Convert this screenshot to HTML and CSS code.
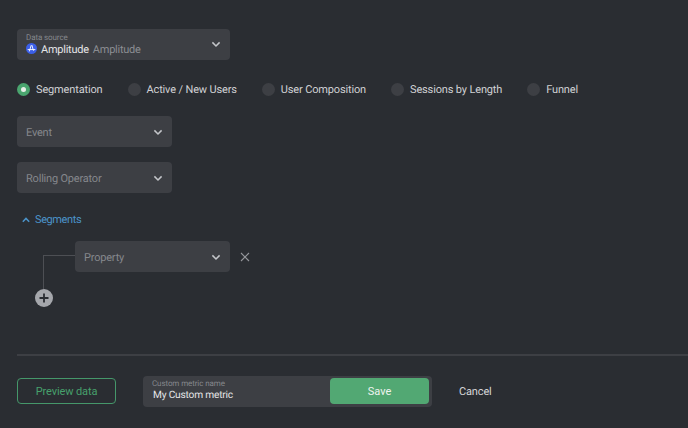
FILE: index.html
```html
<!DOCTYPE html>
<html lang="en">
<head>
<meta charset="utf-8">
<title>Custom metric</title>
<link rel="stylesheet" href="styles.css">
</head>
<body>
<div class="form">
  <div class="select select-source">
    <div class="source-text">
      <span class="mini-label">Data source</span>
      <span class="source-value">
        <svg class="amp-logo" width="11" height="11" viewBox="0 0 12 12"><circle cx="6" cy="6" r="6" fill="#3b5fe8"/><path d="M1.8 7.2h8.4M3.6 9.2 5.6 2.8q.5-1 1 0l1.2 4.6q.3 1 .9.6" fill="none" stroke="#fff" stroke-width="1"/></svg>
        <span class="source-name">Amplitude</span><span class="source-sub">Amplitude</span>
      </span>
    </div>
    <svg class="chev" width="10" height="7" viewBox="0 0 10 7"><path d="M1.4 1.4 5 5 8.6 1.4" fill="none" stroke="#c4c6ca" stroke-width="1.5"/></svg>
  </div>

  <div class="radios">
    <div class="radio-item radio-on"><span class="radio"></span>Segmentation</div>
    <div class="radio-item"><span class="radio"></span>Active / New Users</div>
    <div class="radio-item"><span class="radio"></span>User Composition</div>
    <div class="radio-item"><span class="radio"></span>Sessions by Length</div>
    <div class="radio-item"><span class="radio"></span>Funnel</div>
  </div>

  <div class="select select-field select-event">
    <span>Event</span>
    <svg class="chev" width="10" height="7" viewBox="0 0 10 7"><path d="M1.4 1.4 5 5 8.6 1.4" fill="none" stroke="#c4c6ca" stroke-width="1.5"/></svg>
  </div>
  <div class="select select-field select-rolling">
    <span>Rolling Operator</span>
    <svg class="chev" width="10" height="7" viewBox="0 0 10 7"><path d="M1.4 1.4 5 5 8.6 1.4" fill="none" stroke="#c4c6ca" stroke-width="1.5"/></svg>
  </div>

  <div class="segments-head">
    <svg width="8" height="6" viewBox="0 0 8 6"><path d="M.8 4.8 4 1.4 7.2 4.8" fill="none" stroke="#4b93c9" stroke-width="1.5"/></svg>
    <span>Segments</span>
  </div>

  <div class="segment-tree">
    <div class="tree-line"></div>
    <div class="segment-row">
      <div class="select select-field select-property">
        <span>Property</span>
        <svg class="chev" width="10" height="7" viewBox="0 0 10 7"><path d="M1.4 1.4 5 5 8.6 1.4" fill="none" stroke="#c4c6ca" stroke-width="1.5"/></svg>
      </div>
      <svg class="close" width="10" height="10" viewBox="0 0 10 10"><path d="M1 1 9 9M9 1 1 9" fill="none" stroke="#94969b" stroke-width="1.1"/></svg>
    </div>
    <svg class="add" width="18" height="18" viewBox="0 0 18 18"><circle cx="9" cy="9" r="9" fill="#a5a7ac"/><path d="M9 4.5v9M4.5 9h9" stroke="#2a2d32" stroke-width="1.8"/></svg>
  </div>

  <div class="divider"></div>

  <div class="footer">
    <button class="preview">Preview data</button>
    <div class="name-box">
      <div class="name-text">
        <span class="mini-label">Custom metric name</span>
        <span class="name-value">My Custom metric</span>
      </div>
      <button class="save">Save</button>
    </div>
    <span class="cancel">Cancel</span>
  </div>
</div>
</body>
</html>
```
FILE: styles.css
```css
* { box-sizing: border-box; }
html, body { margin: 0; height: 100%; }
body {
  background: #2a2d32;
  font-family: Roboto, "Liberation Sans", sans-serif;
  text-rendering: geometricPrecision;
  overflow: hidden;
}
.form { padding: 29px 0 0 17px; }
.select {
  display: flex;
  align-items: center;
  justify-content: space-between;
  background: #3d3f44;
  border-radius: 4px;
}
.chev { flex: none; }
.select-source {
  width: 213px;
  height: 31px;
  padding: 0 9px;
}
.source-text { display: flex; flex-direction: column; }
.mini-label {
  font-size: 8px;
  line-height: 10px;
  letter-spacing: -.1px;
  color: #85878c;
}
.source-value {
  display: flex;
  align-items: center;
  font-size: 11px;
  line-height: 14px;
  letter-spacing: -.25px;
}
.amp-logo { margin: -2px 4px 0 0; }
.source-name { color: #e4e5e7; margin-right: 4px; }
.source-sub { color: #8b8d92; }
.radios {
  display: flex;
  margin-top: 23px;
  height: 13px;
  align-items: center;
}
.radio-item {
  display: flex;
  align-items: center;
  font-size: 11px;
  letter-spacing: -.15px;
  color: #d0d1d4;
  white-space: nowrap;
  margin-right: 25px;
}
.radio {
  width: 13px;
  height: 13px;
  border-radius: 50%;
  background: #3d3f44;
  margin-right: 6px;
  flex: none;
}
.radio-on .radio {
  background: #4aa56f;
  position: relative;
}
.radio-on .radio::after {
  content: "";
  position: absolute;
  left: 4px;
  top: 4px;
  width: 5px;
  height: 5px;
  border-radius: 50%;
  background: #e8efe9;
}
.select-field {
  width: 155px;
  height: 31px;
  padding: 1px 9px 0;
  font-size: 11px;
  letter-spacing: -.2px;
  color: #85878c;
}
.select-event { margin-top: 20px; }
.select-rolling { margin-top: 15px; }
.segments-head {
  display: flex;
  align-items: center;
  margin: 20px 0 0 5px;
  gap: 5px;
  font-size: 11px;
  line-height: 14px;
  letter-spacing: -.4px;
  color: #4b93c9;
}
.segment-tree {
  position: relative;
  margin-top: 14px;
  padding-left: 58px;
  height: 67px;
}
.segment-row { display: flex; align-items: center; gap: 10px; }
.tree-line {
  position: absolute;
  left: 26px;
  top: 14px;
  width: 32px;
  height: 34px;
  border-left: 1px solid #4d4f54;
  border-top: 1px solid #4d4f54;
}
.add { position: absolute; left: 18px; top: 48px; }
.divider {
  height: 1.5px;
  background: #3d3f44;
  margin-top: 46px;
}
.footer {
  display: flex;
  align-items: center;
  margin-top: 20px;
}
.preview {
  width: 99px;
  height: 26px;
  background: transparent;
  border: 1px solid #45976a;
  border-radius: 4px;
  color: #47a06c;
  font: 11px Roboto, "Liberation Sans", sans-serif;
  letter-spacing: -.1px;
  padding: 0;
}
.name-box {
  display: flex;
  align-items: center;
  justify-content: space-between;
  width: 289px;
  height: 31px;
  margin-left: 27px;
  padding: 3px 3px 3px 9px;
  background: #3d3f44;
  border-radius: 4px;
}
.name-text { display: flex; flex-direction: column; margin-top: -2px; }
.name-value {
  font-size: 10.2px;
  line-height: 13px;
  letter-spacing: -.2px;
  color: #e4e5e7;
  margin-left: 1px;
}
.save {
  width: 99px;
  height: 26px;
  background: #52a873;
  border: 0;
  border-radius: 4px;
  color: #eef3ef;
  font: 11px Roboto, "Liberation Sans", sans-serif;
  letter-spacing: 0;
  padding: 0;
}
.cancel {
  margin-left: 27px;
  font-size: 11px;
  letter-spacing: -.15px;
  color: #d4d5d7;
}
```
